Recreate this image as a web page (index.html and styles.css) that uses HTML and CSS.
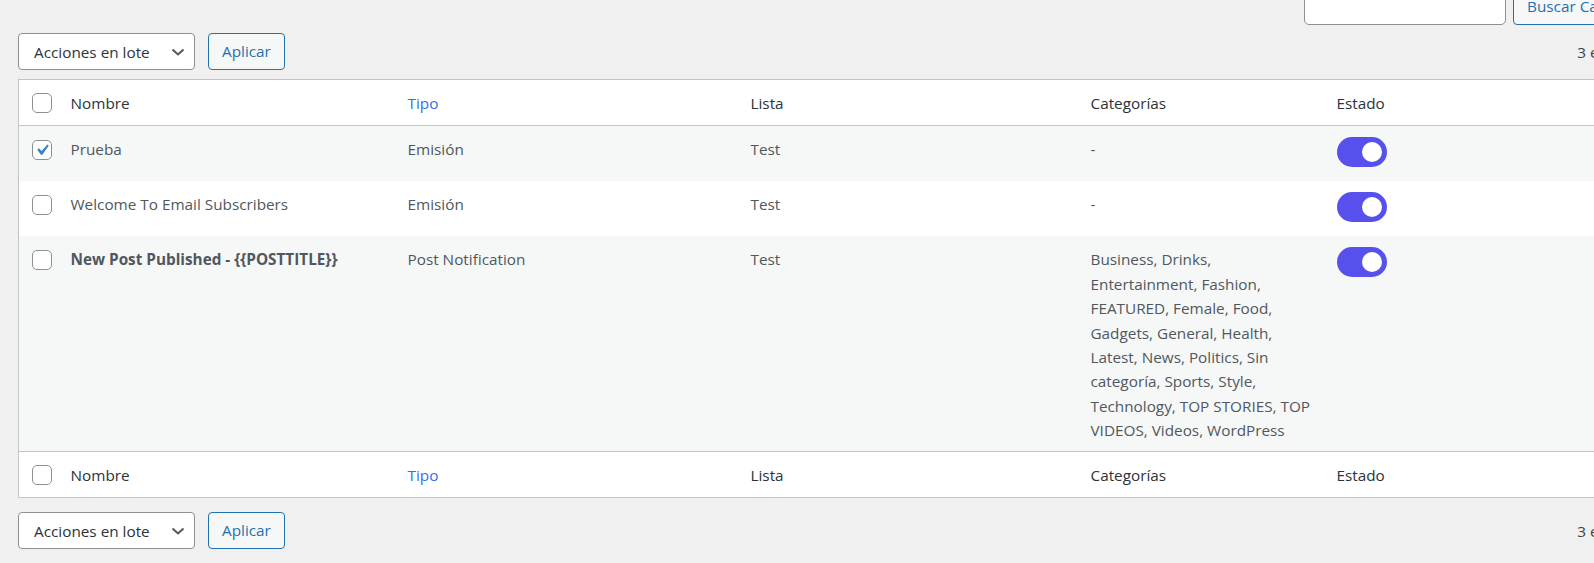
FILE: index.html
```html
<!DOCTYPE html>
<html lang="es">
<head>
<meta charset="utf-8">
<title>Campañas</title>
<link rel="stylesheet" href="styles.css">
</head>
<body>
<div class="wrap">
  <div class="search-box">
    <input class="search-input" type="search" aria-label="Buscar">
    <button class="btn">Buscar Campañas</button>
  </div>

  <div class="tablenav top">
    <div class="bulk">
      <div class="select">
        <span>Acciones en lote</span>
        <svg class="chev" viewBox="0 0 14 8" width="14" height="8"><polyline points="1.5,1.5 7,6.5 12.5,1.5" fill="none" stroke="#50575e" stroke-width="2"/></svg>
      </div>
      <button class="btn">Aplicar</button>
    </div>
    <div class="count">3 elementos</div>
  </div>

  <table class="list">
    <colgroup>
      <col class="c-check"><col class="c-name"><col class="c-tipo"><col class="c-lista"><col class="c-cat"><col>
    </colgroup>
    <thead>
      <tr>
        <td class="check"><span class="cb"></span></td>
        <th>Nombre</th>
        <th class="sorted">Tipo</th>
        <th>Lista</th>
        <th>Categorías</th>
        <th>Estado</th>
      </tr>
    </thead>
    <tbody>
      <tr class="alt">
        <td class="check"><span class="cb checked"><svg viewBox="0 0 20 20" width="22" height="22"><path d="M14.83 4.89l1.34.94-5.81 8.38H9.02L5.78 9.67l1.34-1.25 2.57 2.4z" fill="#3582c4"/></svg></span></td>
        <td>Prueba</td>
        <td>Emisión</td>
        <td>Test</td>
        <td>-</td>
        <td><span class="toggle"><span class="knob"></span></span></td>
      </tr>
      <tr>
        <td class="check"><span class="cb"></span></td>
        <td>Welcome To Email Subscribers</td>
        <td>Emisión</td>
        <td>Test</td>
        <td>-</td>
        <td><span class="toggle"><span class="knob"></span></span></td>
      </tr>
      <tr class="alt">
        <td class="check"><span class="cb"></span></td>
        <td><strong>New Post Published - {{POSTTITLE}}</strong></td>
        <td>Post Notification</td>
        <td>Test</td>
        <td>Business, Drinks, Entertainment, Fashion, FEATURED, Female, Food, Gadgets, General, Health, Latest, News, Politics, Sin categoría, Sports, Style, Technology, TOP STORIES, TOP VIDEOS, Videos, WordPress</td>
        <td><span class="toggle"><span class="knob"></span></span></td>
      </tr>
    </tbody>
    <tfoot>
      <tr>
        <td class="check"><span class="cb"></span></td>
        <th>Nombre</th>
        <th class="sorted">Tipo</th>
        <th>Lista</th>
        <th>Categorías</th>
        <th>Estado</th>
      </tr>
    </tfoot>
  </table>

  <div class="tablenav bottom">
    <div class="bulk">
      <div class="select">
        <span>Acciones en lote</span>
        <svg class="chev" viewBox="0 0 14 8" width="14" height="8"><polyline points="1.5,1.5 7,6.5 12.5,1.5" fill="none" stroke="#50575e" stroke-width="2"/></svg>
      </div>
      <button class="btn">Aplicar</button>
    </div>
    <div class="count">3 elementos</div>
  </div>
</div>
</body>
</html>
```

FILE: styles.css
```css
html, body {
  margin: 0;
  padding: 0;
  background: #f0f0f1;
  overflow: hidden;
}
body {
  font-family: "Open Sans", "Noto Sans", sans-serif;
  font-size: 15.3px;
  color: #50575e;
}
.wrap {
  width: 1651px;
  padding-left: 18px;
}
.search-box {
  display: flex;
  justify-content: flex-end;
  gap: 7px;
  margin-top: -12px;
  height: 37px;
}
.search-input {
  box-sizing: border-box;
  width: 202px;
  height: 37px;
  border: 1px solid #8c8f94;
  border-radius: 5px;
  background: #fff;
  margin: 0;
}
.btn {
  box-sizing: border-box;
  height: 37px;
  padding: 0 13px;
  border: 1px solid #2271b1;
  border-radius: 4px;
  background: #f6f7f7;
  color: #2271b1;
  font-family: inherit;
  font-size: 15.3px;
  line-height: 35px;
  margin: 0;
}
.tablenav {
  display: flex;
  justify-content: space-between;
  align-items: center;
  height: 37px;
}
.tablenav.top {
  margin-top: 8px;
  margin-bottom: 9px;
}
.tablenav.bottom {
  margin-top: 14px;
}
.bulk {
  display: flex;
  gap: 13px;
}
.select {
  box-sizing: border-box;
  width: 177px;
  height: 37px;
  display: flex;
  align-items: center;
  justify-content: space-between;
  padding: 0 9px 0 15px;
  border: 1px solid #8c8f94;
  border-radius: 4px;
  background: #fff;
  color: #2c3338;
}
.chev {
  display: block;
}
.count {
  color: #3c434a;
  padding-right: 4px;
}
.list {
  width: 100%;
  table-layout: fixed;
  border-collapse: collapse;
  background: #fff;
  border: 1px solid #c3c4c7;
}
.c-check { width: 40px; }
.c-name { width: 337px; }
.c-tipo { width: 343px; }
.c-lista { width: 340px; }
.c-cat { width: 246px; }
.list th, .list td {
  text-align: left;
  vertical-align: top;
  line-height: 24.4px;
  padding: 11px 12px 8px;
}
.list th {
  font-weight: normal;
  color: #2c3338;
  padding: 11px 12px 10px;
}
.list thead tr {
  border-bottom: 1px solid #c3c4c7;
}
.list tfoot tr {
  border-top: 1px solid #c3c4c7;
}
.list th.sorted {
  color: #2f6fec;
}
.list tbody tr.alt {
  background: #f6f7f7;
}
.list td.check {
  padding: 14px 0 0 13px;
}
.list thead td.check, .list tfoot td.check {
  padding-top: 13px;
}
.cb {
  box-sizing: border-box;
  display: flex;
  align-items: center;
  justify-content: center;
  width: 20px;
  height: 20px;
  border: 1px solid #8c8f94;
  border-radius: 5px;
  background: #fff;
}
.cb svg {
  display: block;
  flex: none;
}
.list strong {
  font-weight: 700;
  color: #50575e;
}
.toggle {
  box-sizing: border-box;
  display: flex;
  justify-content: flex-end;
  align-items: center;
  width: 50px;
  height: 30px;
  padding-right: 5px;
  border-radius: 15px;
  background: #5850ec;
  margin-top: 0;
  margin-bottom: 6px;
}
.knob {
  width: 20px;
  height: 20px;
  border-radius: 50%;
  background: #fff;
}
```
